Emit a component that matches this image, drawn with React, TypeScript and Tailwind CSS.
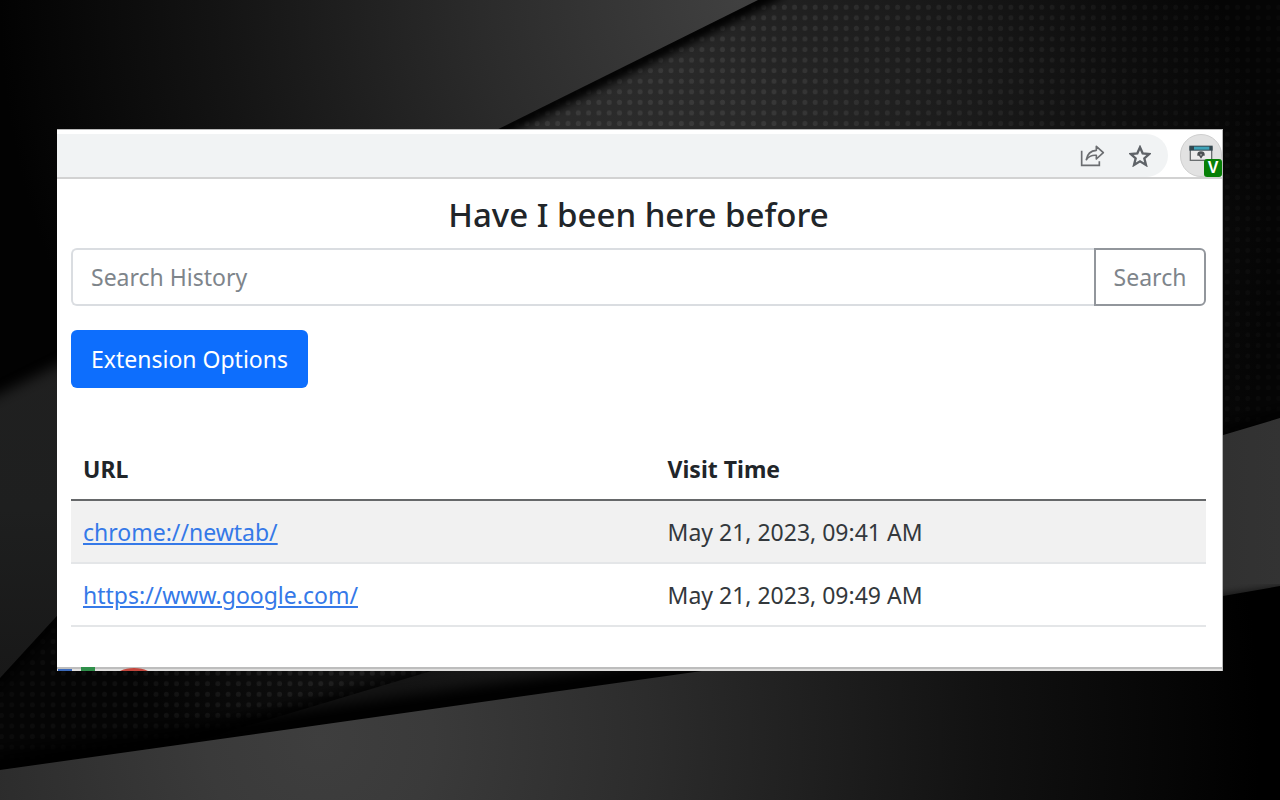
import type { ReactNode } from "react";

type Visit = {
  url: string;
  time: string;
};

const visits: Visit[] = [
  { url: "chrome://newtab/", time: "May 21, 2023, 09:41 AM" },
  { url: "https://www.google.com/", time: "May 21, 2023, 09:49 AM" },
];

function Backdrop() {
  return (
    <svg
      className="absolute inset-0 h-full w-full"
      viewBox="0 0 1280 800"
      preserveAspectRatio="none"
      aria-hidden="true"
    >
      <defs>
        <pattern id="dots" x="635" y="2" width="10.3" height="10.57" patternUnits="userSpaceOnUse">
          <circle cx="5.1" cy="5.2" r="2.5" fill="#fff" fillOpacity="0.08" />
        </pattern>
        <radialGradient id="mesh" gradientUnits="userSpaceOnUse" cx="620" cy="250" r="650">
          <stop offset="0" stopColor="#303030" />
          <stop offset="0.3" stopColor="#282828" />
          <stop offset="0.6" stopColor="#191919" />
          <stop offset="1" stopColor="#050505" />
        </radialGradient>
        <linearGradient id="fade" x1="0" x2="1" y1="0" y2="0">
          <stop offset="0" stopColor="#fff" stopOpacity="0.35" />
          <stop offset="0.3" stopColor="#fff" />
          <stop offset="0.6" stopColor="#fff" />
          <stop offset="1" stopColor="#fff" stopOpacity="0.25" />
        </linearGradient>
        <mask id="dotMask">
          <rect width="1280" height="800" fill="url(#fade)" />
        </mask>
        <radialGradient id="top" gradientUnits="userSpaceOnUse" cx="740" cy="0" r="740">
          <stop offset="0" stopColor="#404040" />
          <stop offset="0.35" stopColor="#2b2b2b" />
          <stop offset="0.7" stopColor="#141414" />
          <stop offset="1" stopColor="#020202" />
        </radialGradient>
        <linearGradient id="left" x1="0" x2="0" y1="0" y2="1">
          <stop offset="0" stopColor="#202020" />
          <stop offset="0.5" stopColor="#1e1f1f" />
          <stop offset="1" stopColor="#181818" />
        </linearGradient>
        <linearGradient id="right" gradientUnits="userSpaceOnUse" x1="400" x2="1280" y1="0" y2="0">
          <stop offset="0" stopColor="#141414" />
          <stop offset="1" stopColor="#333" />
        </linearGradient>
        <radialGradient id="bottom" gradientUnits="userSpaceOnUse" cx="320" cy="740" r="940">
          <stop offset="0" stopColor="#3e3e3e" />
          <stop offset="0.12" stopColor="#3a3a3a" />
          <stop offset="0.35" stopColor="#2c2c2c" />
          <stop offset="0.7" stopColor="#121212" />
          <stop offset="1" stopColor="#000" />
        </radialGradient>
        <filter id="soft" x="-20%" y="-20%" width="140%" height="140%">
          <feGaussianBlur stdDeviation="7" />
        </filter>
        <filter id="tight" x="-20%" y="-20%" width="140%" height="140%">
          <feGaussianBlur stdDeviation="4" />
        </filter>
      </defs>

      <rect width="1280" height="800" fill="url(#mesh)" />
      <rect width="1280" height="800" fill="url(#dots)" mask="url(#dotMask)" />

      <path d="M0 620 L57 617 L0 678 V800 H200 V760 L0 790Z" fill="#000" fillOpacity="0.4" filter="url(#soft)" />
      <path d="M-20 697 L80 590" stroke="#000" strokeWidth="16" filter="url(#soft)" />
      <path d="M0 340 H310 L0 678Z" fill="url(#left)" />

      <path d="M-20 389 L240 259" stroke="#000" strokeWidth="26" filter="url(#soft)" />
      <path d="M200 279 L780 -9" stroke="#000" strokeWidth="14" filter="url(#tight)" />
      <path d="M0 0 H758 L0 377Z" fill="url(#top)" />

      <path d="M200 742 L1290 415" stroke="#000" strokeWidth="14" filter="url(#soft)" />
      <path d="M210 737 L1280 418 V600 L0 790Z" fill="url(#right)" />
      <path d="M-20 769 L430 706 L760 660" stroke="#000" strokeWidth="28" fill="none" filter="url(#soft)" />
      <path d="M1180 604 L1300 588" stroke="#000" strokeWidth="5" filter="url(#tight)" />
      <path d="M0 770 L702 671 L1223 596 L1280 586 V800 H0Z" fill="url(#bottom)" />
    </svg>
  );
}

function ShareIcon() {
  return (
    <svg viewBox="117 72 75 69" className="h-[23px] w-[25px]" fill="none" stroke="#6b6d70" strokeWidth="5">
      <path d="M122 92V136H175V124" />
      <path d="M136 119C139 101 149 92 166 91V79L187 98L166 117V106C152 105 143 109 136 119Z" strokeLinejoin="round" />
    </svg>
  );
}

function StarIcon() {
  return (
    <svg viewBox="267 72 66 66" className="size-[22px]" fill="none" stroke="#5f6368" strokeWidth="7">
      <path d="M300 79L308 97L328 99L313 112L318 132L300 121L282 132L287 112L272 99L292 97Z" />
    </svg>
  );
}

function ExtensionIcon() {
  return (
    <svg viewBox="446 75 72 51" className="h-[17px] w-6">
      <rect x="450" y="82" width="64" height="39" fill="#ececec" stroke="#6a6e70" strokeWidth="4" />
      <rect x="447" y="77" width="70" height="15" fill="#33474f" />
      <rect x="461" y="80" width="46" height="9" fill="#3fa3b8" />
      <path d="M471 103a11 9 0 0 1 22 0v4h-5l-6 9l-6-9h-5z" fill="#4b4f52" />
      <circle cx="482" cy="104" r="3" fill="#999" />
    </svg>
  );
}

function Toolbar() {
  return (
    <div className="flex h-[49px] items-end border-b-2 border-[#d2d2d2] pt-1">
      <div className="flex h-[43px] flex-1 items-center justify-end gap-6 rounded-r-full bg-[#f1f3f4] pr-[17px]">
        <button type="button" aria-label="Share this page">
          <ShareIcon />
        </button>
        <button type="button" aria-label="Bookmark this page">
          <StarIcon />
        </button>
      </div>
      <button
        type="button"
        aria-label="Have I been here before"
        className="relative ml-3 flex h-[43px] w-[42px] items-center justify-center rounded-full border border-[#cfcfcf] bg-[#e2e2e2] pb-1"
      >
        <ExtensionIcon />
        <span className="absolute -right-px -bottom-px flex h-[18px] w-[18px] items-center justify-center rounded-[3px] bg-[#078007] font-['Liberation_Sans',sans-serif] text-base font-bold text-white">
          V
        </span>
      </button>
    </div>
  );
}

function SearchForm() {
  return (
    <form className="flex" onSubmit={(e) => e.preventDefault()}>
      <input
        type="text"
        aria-label="Search History"
        placeholder="Search History"
        className="h-[58px] min-w-0 flex-1 rounded-l-md border-2 border-r-0 border-[#dadde1] px-[18px] placeholder:text-[#7e858b]"
      />
      <button
        type="submit"
        className="h-[58px] w-28 rounded-r-md border-2 border-[#92969c] text-[#7e858b]"
      >
        Search
      </button>
    </form>
  );
}

function HeadCell({ children }: { children: ReactNode }) {
  return <th className="h-[62px] px-3 text-left font-bold">{children}</th>;
}

function VisitTable() {
  return (
    <table className="mt-[50px] w-full table-fixed border-collapse text-[#33383c]">
      <colgroup>
        <col className="w-[51.5%]" />
        <col />
      </colgroup>
      <thead className="border-b-2 border-[#66686a] text-[#212529]">
        <tr>
          <HeadCell>URL</HeadCell>
          <HeadCell>Visit Time</HeadCell>
        </tr>
      </thead>
      <tbody>
        {visits.map((visit) => (
          <tr key={visit.url} className="h-[63px] border-b-2 border-[#e4e6e8] odd:bg-[#f1f1f1]">
            <td className="px-3">
              <a href={visit.url} className="text-[#3579e8] underline underline-offset-2">
                {visit.url}
              </a>
            </td>
            <td className="px-3">{visit.time}</td>
          </tr>
        ))}
      </tbody>
    </table>
  );
}

function TaskbarEdge() {
  return (
    <div className="h-1 border-t-2 border-[#bdbdbd] bg-[#e0dfde]">
      <svg className="-mt-0.5 block h-1 w-24" viewBox="0 0 96 4">
        <rect x="1" y="2" width="14" height="2" fill="#3c6bbd" />
        <rect x="24" y="0" width="14" height="4" fill="#2f8f4a" />
        <ellipse cx="77" cy="10" rx="19" ry="9" fill="#c5473d" />
      </svg>
    </div>
  );
}

export default function App() {
  return (
    <main className="relative flex min-h-screen items-center overflow-hidden bg-black px-[57px] font-['Noto_Sans','Open_Sans',sans-serif] text-[23px] leading-8">
      <Backdrop />
      <section className="relative w-full border-t border-r border-[#b9b9b9] bg-white">
        <Toolbar />
        <div className="pt-4 pr-4 pb-10 pl-3.5">
          <h1 className="mb-[13px] text-center text-[33px] leading-10 font-medium text-[#212529]">
            Have I been here before
          </h1>
          <SearchForm />
          <button
            type="button"
            className="mt-6 h-[58px] rounded-md bg-[#0d6efd] px-5 text-white"
          >
            Extension Options
          </button>
          <VisitTable />
        </div>
        <TaskbarEdge />
      </section>
    </main>
  );
}
